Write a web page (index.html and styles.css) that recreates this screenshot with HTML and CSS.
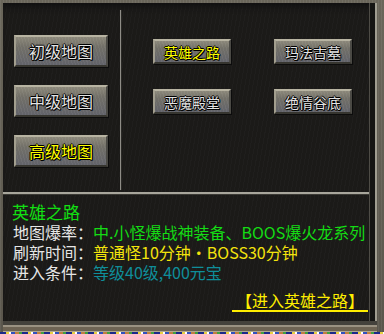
FILE: index.html
```html
<!DOCTYPE html>
<html lang="zh-CN">
<head>
<meta charset="utf-8">
<link rel="stylesheet" href="styles.css">
</head>
<body>
<div class="window">
  <div class="frame">
    <div class="panel">
      <div class="top">
        <div class="left-col">
          <div class="btn big">初级地图</div>
          <div class="btn big">中级地图</div>
          <div class="btn big active">高级地图</div>
        </div>
        <div class="vdiv"></div>
        <div class="right-col">
          <div class="btn small active">英雄之路</div>
          <div class="btn small">玛法古墓</div>
          <div class="btn small">恶魔殿堂</div>
          <div class="btn small">绝情谷底</div>
        </div>
      </div>
      <div class="hdiv"></div>
      <div class="info">
        <div class="title">英雄之路</div>
        <div class="row"><span class="label">地图爆率：</span><span class="green">中.小怪爆战神装备、BOOS爆火龙系列</span></div>
        <div class="row"><span class="label">刷新时间：</span><span class="yellow">普通怪10分钟·BOSS30分钟</span></div>
        <div class="row"><span class="label">进入条件：</span><span class="teal">等级40级,400元宝</span></div>
        <div class="link-row"><span class="link">【进入英雄之路】</span></div>
      </div>
    </div>
  </div>
  <div class="strip"></div>
</div>
</body>
</html>
```
FILE: styles.css
```css
html, body {
  margin: 0;
  padding: 0;
  background: #000;
}
.window {
  width: 384px;
  height: 334px;
  display: flex;
  flex-direction: column;
  font-family: "Noto Sans CJK SC", "Noto Sans", sans-serif;
}
.frame {
  flex: 1;
  display: flex;
  flex-direction: column;
  padding: 3px 7px 0 3px;
  background:
    repeating-linear-gradient(90deg, rgba(255,255,255,0.06) 0 1px, transparent 1px 3px),
    linear-gradient(180deg, #6a665a, #5a564c);
}
.panel {
  flex: 1;
  display: flex;
  flex-direction: column;
  background:
    repeating-linear-gradient(100deg, rgba(255,255,255,0.018) 0 1px, transparent 1px 4px),
    #1b1a18;
  box-shadow:
    inset 0 -1px #b0a890,
    inset 0 -5px #6e6454,
    inset 0 -7px #9a9282,
    inset 0 -11px #44423c,
    inset -2px 0 #a09d90,
    inset -7px 0 #151513,
    inset -8px 0 #4e4c46,
    inset 0 7px 6px -4px #101010;
}
.top {
  height: 189px;
  display: flex;
}
.left-col {
  width: 106px;
  padding: 32px 0 0 11px;
  display: flex;
  flex-direction: column;
  gap: 18px;
}
.vdiv {
  width: 1px;
  margin: 7px 0 2px 0;
  background: #8e8c86;
  box-shadow: 1px 0 #2a2926;
}
.right-col {
  padding: 36px 0 0 32px;
  display: grid;
  grid-template-columns: 78px 78px;
  grid-auto-rows: 25px;
  column-gap: 43px;
  row-gap: 25px;
  align-content: start;
}
.btn {
  box-sizing: border-box;
  display: flex;
  align-items: center;
  justify-content: center;
  color: #e4e4e4;
  text-shadow: 1px 0 #000, -1px 0 #000, 0 1px #000, 0 -1px #000, 1px 1px #000;
  background:
    repeating-linear-gradient(75deg, rgba(255,255,255,0.05) 0 1px, transparent 1px 3px),
    linear-gradient(180deg, #8c887a 0%, #727068 35%, #62636a 100%);
  border-top: 2px solid #b8b4a2;
  border-left: 2px solid #a29e8e;
  border-right: 2px solid #4a4944;
  border-bottom: 2px solid #36352f;
  box-shadow: 1px 1px 0 #0c0c0c;
}
.big {
  width: 94px;
  height: 32px;
  font-size: 16px;
}
.small {
  width: 78px;
  height: 25px;
  font-size: 14px;
}
.btn.active {
  color: #ffff00;
}
.hdiv {
  height: 2px;
  margin-right: 8px;
  background: #a8a69c;
  box-shadow: 0 1px #3a3934;
}
.info {
  flex: 1;
  padding: 7px 9px 0 9px;
  font-size: 16px;
  color: #e6e6e6;
}
.title {
  font-size: 17px;
  line-height: 21px;
  color: #12e012;
}
.row {
  line-height: 20px;
  white-space: nowrap;
  padding-left: 1px;
}
.green { color: #14dc14; }
.yellow { color: #f4e40c; }
.teal { color: #0f8e9a; }
.link-row {
  display: flex;
  justify-content: flex-end;
  margin-top: 8px;
}
.link {
  width: 136px;
  text-align: center;
  line-height: 20px;
  color: #ffee00;
  border-bottom: 2px solid #ffee00;
}
.strip {
  height: 2px;
  background: repeating-linear-gradient(90deg, #1a2a8a 0 6px, #e8d040 6px 9px, #fff 9px 11px, #3050c0 11px 15px, #c08040 15px 19px, #40a040 19px 22px);
}
```
